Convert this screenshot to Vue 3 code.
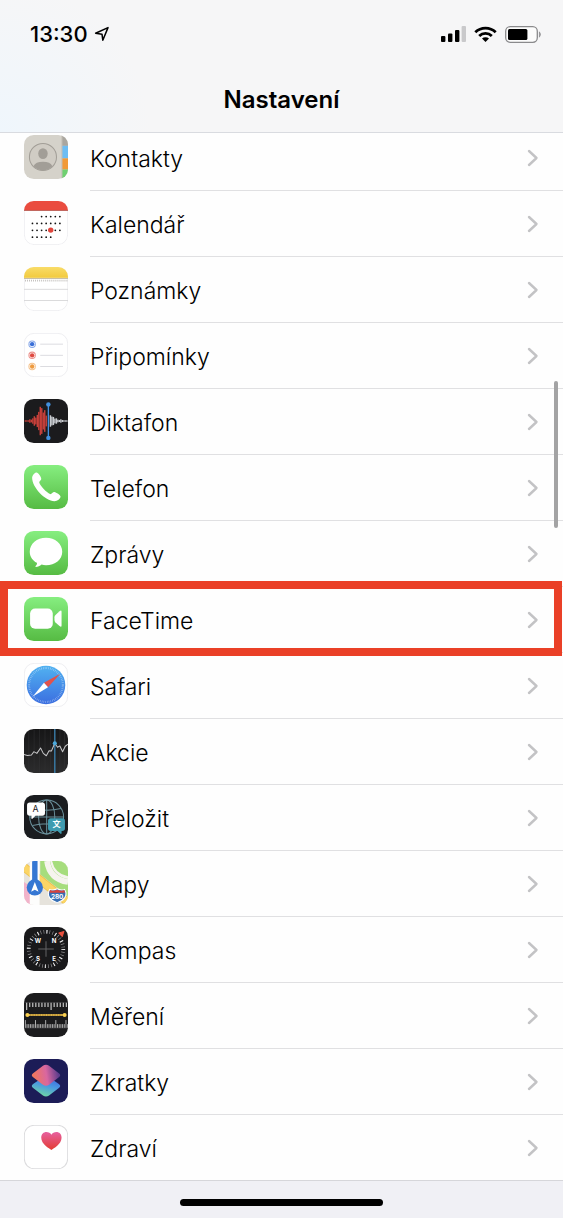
<template>
  <div class="screen">
    <header class="top-bar">
      <div class="status">
        <div class="status-left">
          <span class="clock">13:30</span>
          <svg class="location" viewBox="0 0 16 16" aria-hidden="true">
            <path d="M1.6 7.2 L14 1.6 L8.8 14.2 L8 8.2 Z" fill="none" stroke="#000" stroke-width="1.5" stroke-linejoin="round" />
          </svg>
        </div>
        <div class="status-right">
          <svg class="signal" viewBox="0 0 26 16" aria-hidden="true">
            <rect x="1" y="10" width="4.4" height="6" rx="1" />
            <rect x="8" y="7.4" width="4.4" height="8.6" rx="1" />
            <rect x="15" y="4" width="4.4" height="12" rx="1" />
            <rect x="21.6" y="0" width="4.4" height="16" rx="1" fill="#c9c9cb" />
          </svg>
          <svg class="wifi" viewBox="0 0 23 16" aria-hidden="true">
            <g fill="none" stroke="#000" stroke-width="2.8">
              <path d="M1.3 6.2 A14.6 14.6 0 0 1 21.7 6.2" />
              <path d="M5.2 10 A9 9 0 0 1 17.8 10" />
            </g>
            <path d="M11.5 16 L8 12.6 A5 5 0 0 1 15 12.6 Z" />
          </svg>
          <svg class="battery" viewBox="0 0 37 17" aria-hidden="true">
            <rect x="0.7" y="0.7" width="31.6" height="15.6" rx="4.5" fill="#fcfcfc" stroke="#8a8a8c" stroke-width="1.3" />
            <rect x="3" y="3" width="19.4" height="11" rx="1.5" />
            <path d="M34.4 5.8 Q36.6 8.5 34.4 11.2 Z" fill="#8a8a8c" stroke="#8a8a8c" stroke-width="0.6" />
          </svg>
        </div>
      </div>
      <h1>Nastavení</h1>
    </header>

    <main class="list-wrap">
      <ul class="list">
        <li v-for="app in apps" :key="app.id" class="row" :class="{ marked: app.marked }">
          <a href="#" class="row-link">
            <svg class="icon" viewBox="0 0 130 130" aria-hidden="true">
              <g v-if="app.id === 'contacts'" clip-path="url(#tile)">
                <rect width="130" height="130" fill="#d5d2ca" />
                <rect x="113" width="17" height="32" fill="#aaa69f" />
                <rect x="113" y="32" width="17" height="37" fill="#6dbdf3" />
                <rect x="113" y="69" width="17" height="33" fill="#f19a37" />
                <rect x="113" y="102" width="17" height="28" fill="#6fd171" />
                <path d="M112 0 V130" stroke="#b9b5ad" stroke-width="2" />
                <circle cx="56" cy="65" r="40" fill="#d0ccc4" stroke="#a29e97" stroke-width="3" />
                <ellipse cx="56" cy="55" rx="14" ry="16" fill="#a29e97" />
                <path d="M28 92 Q34 79 56 79 Q78 79 84 92 Q72 104 56 104 Q40 104 28 92 Z" fill="#a29e97" />
              </g>

              <g v-else-if="app.id === 'calendar'" clip-path="url(#tile)">
                <rect width="130" height="130" fill="#fff" />
                <rect x="1" y="1" width="128" height="128" rx="29" fill="none" class="edge" />
                <rect width="130" height="28" fill="#ea4c3f" />
                <path d="M0 28 H130" stroke="#a8453d" stroke-width="2" />
                <circle v-for="(d, i) in calendarDots" :key="i" :cx="d.x" :cy="d.y" r="2.6" fill="#111" />
                <circle cx="79" cy="86" r="8" fill="#e0453c" />
              </g>

              <g v-else-if="app.id === 'notes'" clip-path="url(#tile)">
                <rect width="130" height="130" fill="#fff" />
                <rect x="1" y="1" width="128" height="128" rx="29" fill="none" class="edge" />
                <rect width="130" height="32" fill="url(#yellow)" />
                <path d="M0 34 H130" stroke="#c9bfa4" stroke-width="3" />
                <path d="M3 40 H130" stroke="#bcb9b5" stroke-width="5" stroke-dasharray="2.5 3.5" />
                <path d="M0 66 H130 M0 99 H130" stroke="#d4d4d6" stroke-width="2.5" />
              </g>

              <g v-else-if="app.id === 'reminders'">
                <rect x="1" y="1" width="128" height="128" rx="29" fill="#fff" class="edge" />
                <g v-for="dot in reminderDots" :key="dot.y">
                  <circle cx="24" :cy="dot.y" r="9.5" fill="#fff" :stroke="dot.color" stroke-width="3" stroke-opacity="0.6" />
                  <circle cx="24" :cy="dot.y" r="6.4" :fill="dot.color" />
                  <path :d="`M48 ${dot.y} H115`" stroke="#d6d6da" stroke-width="2.5" />
                </g>
              </g>

              <g v-else-if="app.id === 'voice'">
                <rect width="130" height="130" rx="29" fill="#1b1b1d" />
                <rect v-for="(h, i) in redBars" :key="'r' + i" :x="2 + i * 4.4" :y="65 - h" width="4.2" :height="h * 2" fill="#c8403a" />
                <rect v-for="(h, i) in whiteBars" :key="'w' + i" :x="76 + i * 4.4" :y="65 - h" width="4.2" :height="h * 2" fill="#c9ccd1" />
                <path d="M72 16 V115" stroke="#4290dd" stroke-width="4" />
                <circle cx="72" cy="16" r="6.5" fill="#4290dd" />
                <circle cx="72" cy="115" r="6.5" fill="#4290dd" />
              </g>

              <g v-else-if="app.id === 'phone'">
                <rect width="130" height="130" rx="29" fill="url(#green)" />
                <path d="M24 38 C24 30 32 22 37 22 C42 22 51 35 51 41 C51 46 44 47 45 52 C48 62 67 82 77 86 C82 87 85 79 90 80 C95 81 108 89 108 94 C107 100 99 107 90 107 C62 107 24 66 24 38 Z" fill="#fff" />
              </g>

              <g v-else-if="app.id === 'messages'">
                <rect width="130" height="130" rx="29" fill="url(#green)" />
                <path d="M65 20 C92 20 113 38 113 61 C113 84 92 101 65 101 C60 101 56 100 52 99 C47 103 41 106 35 106 C33 106 34 104 35 103 C38 100 39 97 38 94 C25 87 17 75 17 61 C17 38 38 20 65 20 Z" fill="#fff" />
              </g>

              <g v-else-if="app.id === 'facetime'">
                <rect width="130" height="130" rx="29" fill="url(#green)" />
                <rect x="18" y="34" width="67" height="60" rx="15" fill="#fff" />
                <path d="M90 60 Q90 56 93 53 L105 42 Q111 37 111 44 V84 Q111 91 105 86 L93 75 Q90 72 90 68 Z" fill="#fff" />
              </g>

              <g v-else-if="app.id === 'safari'">
                <rect x="1" y="1" width="128" height="128" rx="29" fill="#fff" class="edge" />
                <circle cx="65" cy="65" r="57" fill="url(#blue)" />
                <circle cx="65" cy="65" r="50" fill="none" stroke="#fff" stroke-opacity="0.5" stroke-width="6" stroke-dasharray="1.6 3.64" />
                <path d="M107 32 L59 58 L71 72 Z" fill="#e2524c" />
                <path d="M26 99 L59 58 L71 72 Z" fill="#fff" />
              </g>

              <g v-else-if="app.id === 'stocks'" clip-path="url(#tile)">
                <rect width="130" height="130" fill="url(#charcoal)" />
                <path d="M14 0 V130 M30 0 V130 M46 0 V130 M62 0 V130 M78 0 V130 M106 0 V130 M120 0 V130" stroke="#333335" stroke-width="1.5" />
                <path d="M91 0 V130" stroke="#3b80ad" stroke-width="4" />
                <path d="M0 75 L10 78 L22 77 L29 67 L38 72 L49 56 L57 72 L66 79 L74 64 L81 65 L91 42 L99 54 L106 50 L114 67 L122 51 L130 45" fill="none" stroke="#c6c6c8" stroke-width="3" stroke-linejoin="round" />
                <circle cx="91" cy="42" r="6" fill="#4eaadb" />
              </g>

              <g v-else-if="app.id === 'translate'">
                <rect width="130" height="130" rx="29" fill="#1a1c1f" />
                <g fill="none" stroke="#6a909b" stroke-width="3">
                  <circle cx="67" cy="65" r="50" />
                  <ellipse cx="67" cy="65" rx="24" ry="50" />
                  <path d="M67 15 V115 M17 65 H117 M25 40 Q67 50 109 40 M25 90 Q67 80 109 90" />
                </g>
                <path d="M17 22 H54 Q62 22 62 30 V53 Q62 61 54 61 H34 L24 71 Q22 72 22 69 V61 H17 Q9 61 9 53 V30 Q9 22 17 22 Z" fill="#fff" />
                <path d="M79 69 H113 Q121 69 121 77 V98 Q121 106 113 106 H111 V113 Q110 117 107 114 L99 106 H79 Q71 106 71 98 V77 Q71 69 79 69 Z" fill="#3f9bb0" />
                <text x="34" y="51" class="glyph" font-size="26" fill="#222">A</text>
                <text x="96" y="96" class="glyph bold" font-size="24" fill="#fff">文</text>
              </g>

              <g v-else-if="app.id === 'maps'" clip-path="url(#tile)">
                <rect width="130" height="130" fill="#e6e3dc" />
                <path d="M48 0 H130 V104 L48 40 Z" fill="#a6dd7d" />
                <path d="M68 0 Q76 54 130 62" fill="none" stroke="#f6f4ef" stroke-width="17" />
                <path d="M77 0 Q86 46 130 53 V0 Z" fill="#f6f4ef" />
                <path d="M83 0 Q91 38 130 45 V0 Z" fill="#a6dd7d" />
                <path d="M0 62 L20 76 V130 H0 Z" fill="#f2b3ca" />
                <path d="M0 18 L130 122" stroke="#eec14a" stroke-width="25" />
                <path d="M0 18 L130 122" stroke="#fbd566" stroke-width="20" />
                <rect x="17" width="29" height="130" fill="#fdfdfc" />
                <rect x="24" width="16" height="78" fill="#3577d3" />
                <circle cx="32" cy="78" r="24" fill="#3577d3" />
                <path d="M32 62 L43 91 L32 85 L21 91 Z" fill="#fff" />
                <path d="M76 84 Q86 88 98 82 Q110 88 120 84 Q128 97 120 109 Q113 119 98 123 Q83 119 76 109 Q68 97 76 84 Z" fill="#376fb5" stroke="#fff" stroke-width="3" />
                <path d="M77 86 Q86 90 98 85 Q110 90 119 86 L121 94 H75 Z" fill="#d5433f" />
                <text x="98" y="112" class="glyph bold" font-size="19" fill="#fff">280</text>
              </g>

              <g v-else-if="app.id === 'compass'">
                <rect width="130" height="130" rx="29" fill="#19191b" />
                <circle cx="65" cy="65" r="51" fill="none" stroke="#8e8e90" stroke-width="11" stroke-dasharray="2 6.9" />
                <circle cx="65" cy="65" r="51" fill="none" stroke="#e9e9ea" stroke-width="11" stroke-dasharray="3 23.7" />
                <path d="M65 42 V88 M42 65 H88" stroke="#626264" stroke-width="3" />
                <path d="M103 18 L118 13 L113 28 Z" fill="#e9513f" stroke="#e9513f" stroke-width="3" stroke-linejoin="round" />
                <g class="glyph bold" font-size="18" fill="#fff">
                  <text x="41" y="48">W</text>
                  <text x="89" y="48">N</text>
                  <text x="41" y="99">S</text>
                  <text x="89" y="99">E</text>
                </g>
              </g>

              <g v-else-if="app.id === 'measure'" clip-path="url(#tile)">
                <rect width="130" height="130" fill="#1b1b1d" />
                <path d="M0 28 H130 M0 104 H130" stroke="#3c3c3e" stroke-width="2" />
                <path v-for="n in 14" :key="'t' + n" :d="`M${n * 9 - 1} 29 V${n % 8 === 1 ? 50 : 41}`" stroke="#e4e4e4" stroke-width="3" />
                <path v-for="n in 26" :key="'b' + n" :d="`M${n * 5 - 1} 103 V${n % 6 === 1 ? 80 : 92}`" stroke="#cfcfcf" stroke-width="2.4" />
                <path d="M10 65 H120" stroke="#a98432" stroke-width="6" />
                <path d="M10 65 H120" stroke="#ecc24d" stroke-width="4" stroke-dasharray="3 2" />
                <circle cx="10" cy="65" r="6" fill="#fad051" />
                <circle cx="120" cy="65" r="6" fill="#fad051" />
              </g>

              <g v-else-if="app.id === 'shortcuts'">
                <rect width="130" height="130" rx="29" fill="#1c1c57" />
                <path d="M56 54 Q65 48 74 54 L103 74 Q111 80 103 86 L74 108 Q65 114 56 108 L27 86 Q19 80 27 74 Z" fill="url(#aqua)" />
                <path d="M56 20 Q65 14 74 20 L103 42 Q111 48 103 54 L74 76 Q65 82 56 76 L27 54 Q19 48 27 42 Z" fill="url(#coral)" />
              </g>

              <g v-else>
                <rect x="1" y="1" width="128" height="128" rx="29" fill="#fff" stroke="#dcdcde" stroke-width="3" />
                <path d="M81 74 C75 70 51 57 51 38 C51 27 58 21 66 21 C73 21 78 24 81 29 C84 24 89 21 96 21 C104 21 111 27 111 38 C111 57 87 70 81 74 Z" fill="url(#heart)" />
              </g>
            </svg>
            <span class="content">
              <span class="name">{{ app.name }}</span>
              <svg class="chevron" viewBox="0 0 12 18" aria-hidden="true">
                <path d="M2 2 L9.5 9 L2 16" fill="none" stroke="#c3c3c5" stroke-width="2.4" stroke-linecap="round" stroke-linejoin="round" />
              </svg>
            </span>
          </a>
        </li>
      </ul>
      <div class="scroll-thumb"></div>
    </main>

    <footer class="home-area">
      <div class="home-indicator"></div>
    </footer>

    <!-- gradients and the tile mask shared by the icons -->
    <svg class="defs" aria-hidden="true">
      <defs>
        <clipPath id="tile"><rect width="130" height="130" rx="29" /></clipPath>
        <linearGradient id="green" x1="0" y1="0" x2="0" y2="1">
          <stop offset="0" stop-color="#86ee80" />
          <stop offset="1" stop-color="#56bb43" />
        </linearGradient>
        <linearGradient id="yellow" x1="0" y1="0" x2="0" y2="1">
          <stop offset="0" stop-color="#f9dc68" />
          <stop offset="1" stop-color="#f2ca3e" />
        </linearGradient>
        <linearGradient id="blue" x1="0" y1="0" x2="0" y2="1">
          <stop offset="0" stop-color="#51b2f1" />
          <stop offset="1" stop-color="#3b6ee0" />
        </linearGradient>
        <linearGradient id="charcoal" x1="0" y1="0" x2="0" y2="1">
          <stop offset="0" stop-color="#161617" />
          <stop offset="1" stop-color="#2c2c2d" />
        </linearGradient>
        <linearGradient id="coral" x1="0.1" y1="0.6" x2="0.95" y2="0.5">
          <stop offset="0" stop-color="#ee7661" />
          <stop offset="0.5" stop-color="#d967a0" />
          <stop offset="1" stop-color="#5d3c8c" />
        </linearGradient>
        <linearGradient id="aqua" x1="0.8" y1="0" x2="0.4" y2="1">
          <stop offset="0" stop-color="#3a5fe0" />
          <stop offset="0.5" stop-color="#4b9be0" />
          <stop offset="1" stop-color="#6fd6a4" />
        </linearGradient>
        <linearGradient id="heart" x1="0" y1="0" x2="0" y2="1">
          <stop offset="0" stop-color="#e7609f" />
          <stop offset="1" stop-color="#e33c32" />
        </linearGradient>
      </defs>
    </svg>
  </div>
</template>

<script setup>
const apps = [
  { id: 'contacts', name: 'Kontakty' },
  { id: 'calendar', name: 'Kalendář' },
  { id: 'notes', name: 'Poznámky' },
  { id: 'reminders', name: 'Připomínky' },
  { id: 'voice', name: 'Diktafon' },
  { id: 'phone', name: 'Telefon' },
  { id: 'messages', name: 'Zprávy' },
  { id: 'facetime', name: 'FaceTime', marked: true },
  { id: 'safari', name: 'Safari' },
  { id: 'stocks', name: 'Akcie' },
  { id: 'translate', name: 'Přeložit' },
  { id: 'maps', name: 'Mapy' },
  { id: 'compass', name: 'Kompas' },
  { id: 'measure', name: 'Měření' },
  { id: 'shortcuts', name: 'Zkratky' },
  { id: 'health', name: 'Zdraví' }
];

// first and last day column for every week
const weeks = [[2, 6], [0, 6], [0, 6], [0, 4]];
const calendarDots = weeks.flatMap(([from, to], week) => {
  const dots = [];
  for (let day = from; day <= to; day++) {
    dots.push({ x: 25 + day * 13.5, y: 46 + week * 20.3 });
  }
  return dots;
});

const reminderDots = [
  { y: 33, color: '#3a6fd8' },
  { y: 66, color: '#df4a41' },
  { y: 99, color: '#ee9a3f' }
];

const redBars = [2, 2, 2, 5, 4, 8, 14, 10, 18, 27, 42, 38, 25, 32, 16];
const whiteBars = [17, 13, 12, 7, 8, 4, 3, 5, 3, 2, 2, 2];
</script>

<style>
body {
  background-color: #f0f0f5;
}
</style>

<style scoped>
.screen {
  display: flex;
  flex-direction: column;
  min-height: 100vh;
  background-color: #f0f0f5;
  color: #000;
  font-family: Inter, "Liberation Sans", sans-serif;
}

.top-bar {
  position: relative;
  z-index: 2;
  box-sizing: border-box;
  height: 133px;
  background: radial-gradient(circle at 0 100%, #eff6fc 0, #f6f6f7 150px);
  border-bottom: 1px solid #d9dbe0;
}

.status {
  display: flex;
  justify-content: space-between;
  align-items: center;
  padding: 20px 21px 0 30px;
  height: 28px;
}

.status-left {
  display: flex;
  align-items: center;
  gap: 6px;
}

.clock {
  font-size: 22px;
  font-weight: 500;
  line-height: 28px;
}

.location {
  width: 16px;
  height: 16px;
}

.status-right {
  display: flex;
  align-items: center;
  gap: 8px;
}

.signal {
  width: 26px;
  height: 16px;
}

.wifi {
  width: 23px;
  height: 16px;
}

.battery {
  width: 37px;
  height: 17px;
}

h1 {
  margin: 37px 0 0;
  font-size: 24px;
  font-weight: 600;
  line-height: 30px;
  text-align: center;
}

/* the first row sits partly below the bar */
.list-wrap {
  position: relative;
  margin-top: -8px;
}

.list {
  margin: 0;
  padding: 0;
  list-style: none;
  background-color: #fefefe;
  border-bottom: 1px solid #d6d6da;
}

.row {
  position: relative;
}

.row-link {
  display: flex;
  align-items: flex-start;
  gap: 22px;
  padding-left: 24px;
  color: inherit;
  text-decoration: none;
}

.icon {
  flex: none;
  width: 44px;
  height: 44px;
  margin-top: 10px;
}

.content {
  flex: 1;
  display: flex;
  justify-content: space-between;
  align-items: center;
  height: 65px;
  padding-right: 24px;
  border-bottom: 1px solid #e0e0e2;
}

.row:last-child .content {
  border-bottom: none;
}

.name {
  padding-top: 2px;
  font-size: 23px;
  font-weight: 300;
  line-height: 32px;
}

.chevron {
  width: 12px;
  height: 18px;
}

.marked::after {
  content: "";
  position: absolute;
  top: -6px;
  right: 1px;
  bottom: -3px;
  left: 0;
  border: 8px solid #ea4027;
  pointer-events: none;
}

.scroll-thumb {
  position: absolute;
  top: 256px;
  right: 5px;
  width: 4px;
  height: 147px;
  border-radius: 2px;
  background-color: #a3a3a4;
}

.home-area {
  display: flex;
  justify-content: center;
  padding: 18px 0 12px;
}

.home-indicator {
  width: 36%;
  height: 7px;
  border-radius: 4px;
  background-color: #000;
}

.edge {
  stroke: #ebebee;
  stroke-width: 2.5;
}

.glyph {
  font-family: Inter, "Noto Sans CJK SC", sans-serif;
  text-anchor: middle;
}

.bold {
  font-weight: 700;
}

.defs {
  position: absolute;
  width: 0;
  height: 0;
}
</style>
